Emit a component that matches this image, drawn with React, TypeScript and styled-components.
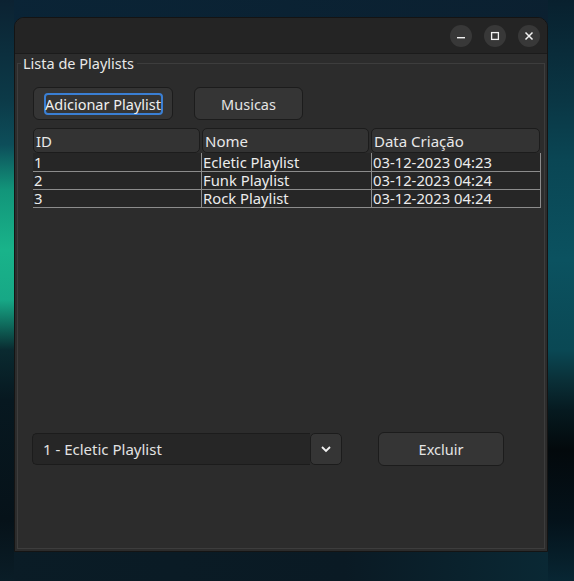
import React from "react";
import styled, { createGlobalStyle } from "styled-components";

const GlobalStyle = createGlobalStyle`
  html, body { margin: 0; padding: 0; }
  body {
    width: 574px; height: 581px; overflow: hidden;
    font-family: "Noto Sans", "Open Sans", sans-serif;
    -webkit-font-smoothing: antialiased;
  }
  * { box-sizing: border-box; }
`;

const Desktop = styled.div`
  width: 574px;
  height: 581px;
  padding: 17px 0 0 14px;
  background:
    linear-gradient(180deg, #0c2232 0px, #0c3a48 100px, #0d4e5a 145px, #12957a 190px, #19b38a 250px, #17a886 300px, #0f6a5c 325px, #0a2a30 350px, #071820 400px, #061219 520px, #0a1d27 581px) left top / 14px 581px no-repeat,
    linear-gradient(180deg, #08202e 0px, #0a3644 100px, #0a4654 160px, #0b5260 260px, #0a4854 350px, #0a3038 380px, #061a20 410px, #03090c 450px, #04121a 520px, #082633 581px) right top / 26px 581px no-repeat,
    linear-gradient(90deg, #0a1c26 0%, #0a1a24 60%, #0a2a36 100%) left bottom / 574px 30px no-repeat,
    linear-gradient(90deg, #0a2436 0%, #0b2030 100%);
`;

const Window = styled.div`
  width: 534px;
  height: 535px;
  display: flex;
  flex-direction: column;
  background: #2c2c2c;
  border: 1px solid #141414;
  border-radius: 10px 10px 0 0;
  overflow: hidden;
  color: #e8e8e8;
  font-size: 14.5px;
`;

const TitleBar = styled.div`
  height: 36px;
  flex: none;
  display: flex;
  align-items: center;
  justify-content: flex-end;
  gap: 12px;
  padding-right: 7px;
  background: #242424;
  border-bottom: 1px solid #1b1b1b;
`;

const TitleButton = styled.div`
  width: 22px;
  height: 22px;
  border-radius: 50%;
  background: #383838;
  display: flex;
  align-items: center;
  justify-content: center;
  color: #f2f2f2;
`;

const Body = styled.div`
  flex: 1;
  display: flex;
  padding: 0 2px 2px 2px;
`;

const Group = styled.fieldset`
  flex: 1;
  margin: 0;
  padding: 15px 2px 0 15px;
  border: 1px solid #3d3d3d;
  min-width: 0;
`;

const Legend = styled.legend`
  margin-left: -12px;
  padding: 0 3px 0 2px;
  line-height: 18px;
  font-size: 14.5px;
  color: #e8e8e8;
`;

const ButtonRow = styled.div`
  display: flex;
  gap: 21px;
`;

const Button = styled.button<{ $w: number; $h?: number }>`
  width: ${(p) => p.$w}px;
  height: ${(p) => p.$h ?? 33}px;
  background: #353535;
  border: 1px solid #1c1c1c;
  border-radius: 6px;
  color: #e4e4e4;
  font-family: inherit;
  font-size: 14.5px;
  padding: 0;
  display: flex;
  align-items: center;
  justify-content: center;
`;

const FocusRing = styled.span`
  border: 2px solid #3a7fd4;
  border-radius: 4px;
  height: 22px;
  width: 119px;
  display: flex;
  align-items: center;
  justify-content: center;
  color: #f0f0f0;
  white-space: nowrap;
`;

const Table = styled.div`
  margin-top: 8px;
  width: 508px;
`;

const HeaderRow = styled.div`
  display: grid;
  grid-template-columns: 167px 167px 169px;
  column-gap: 2px;
`;

const HeaderCell = styled.div`
  height: 25px;
  background: #333333;
  border: 1px solid #1c1c1c;
  border-radius: 5px;
  padding-left: 2px;
  display: flex;
  align-items: center;
  font-size: 15px;
  color: #e8e8e8;
`;

const DataRow = styled.div<{ $first?: boolean }>`
  display: grid;
  grid-template-columns: 168px 170px 170px;
  height: ${(p) => (p.$first ? 19 : 18)}px;
  background: #262626;
  border-bottom: 1px solid #8c8c8c;
`;

const DataCell = styled.div<{ $sep?: boolean }>`
  border-left: ${(p) => (p.$sep ? "1px solid #8c8c8c" : "none")};
  padding-left: 1px;
  display: flex;
  align-items: center;
  font-size: 14.8px;
  line-height: 17px;
  color: #ececec;
  white-space: nowrap;
  &:last-child { border-right: 1px solid #8c8c8c; }
`;

const BottomRow = styled.div`
  margin-top: 224px;
  margin-left: -1px;
  display: flex;
  align-items: center;
`;

const Combo = styled.div`
  display: flex;
  height: 32px;
`;

const ComboField = styled.div`
  width: 278px;
  background: #262626;
  border: 1px solid #1c1c1c;
  border-right: none;
  border-radius: 5px 0 0 5px;
  padding-left: 10px;
  display: flex;
  align-items: center;
  font-size: 15px;
  color: #e2e2e2;
`;

const ComboButton = styled.div`
  width: 32px;
  background: #353535;
  border: 1px solid #1c1c1c;
  border-radius: 5px;
  display: flex;
  align-items: center;
  justify-content: center;
  color: #f2f2f2;
`;

const DeleteWrap = styled.div`
  margin-left: 36px;
`;

const rows = [
  ["1", "Ecletic Playlist", "03-12-2023 04:23"],
  ["2", "Funk Playlist", "03-12-2023 04:24"],
  ["3", "Rock Playlist", "03-12-2023 04:24"],
];

export default function App() {
  return (
    <>
      <GlobalStyle />
      <Desktop>
        <Window>
          <TitleBar>
            <TitleButton>
              <svg width="10" height="10" viewBox="0 0 10 10">
                <rect x="1" y="6" width="8" height="1.4" fill="currentColor" />
              </svg>
            </TitleButton>
            <TitleButton>
              <svg width="10" height="10" viewBox="0 0 10 10">
                <rect x="1.6" y="1.6" width="6.8" height="6.8" fill="none" stroke="currentColor" strokeWidth="1.3" />
              </svg>
            </TitleButton>
            <TitleButton>
              <svg width="10" height="10" viewBox="0 0 10 10">
                <path d="M1.5 1.5 L8.5 8.5 M8.5 1.5 L1.5 8.5" stroke="currentColor" strokeWidth="1.5" />
              </svg>
            </TitleButton>
          </TitleBar>
          <Body>
            <Group>
              <Legend>Lista de Playlists</Legend>
              <ButtonRow>
                <Button $w={140}>
                  <FocusRing>Adicionar Playlist</FocusRing>
                </Button>
                <Button $w={109}>Musicas</Button>
              </ButtonRow>
              <Table>
                <HeaderRow>
                  <HeaderCell>ID</HeaderCell>
                  <HeaderCell>Nome</HeaderCell>
                  <HeaderCell>Data Criação</HeaderCell>
                </HeaderRow>
                {rows.map((r, i) => (
                  <DataRow key={r[0]} $first={i === 0}>
                    <DataCell>{r[0]}</DataCell>
                    <DataCell $sep>{r[1]}</DataCell>
                    <DataCell $sep>{r[2]}</DataCell>
                  </DataRow>
                ))}
              </Table>
              <BottomRow>
                <Combo>
                  <ComboField>1 - Ecletic Playlist</ComboField>
                  <ComboButton>
                    <svg width="12" height="8" viewBox="0 0 12 8">
                      <path d="M2 2 L6 6 L10 2" fill="none" stroke="currentColor" strokeWidth="1.8" />
                    </svg>
                  </ComboButton>
                </Combo>
                <DeleteWrap>
                  <Button $w={126} $h={34}>Excluir</Button>
                </DeleteWrap>
              </BottomRow>
            </Group>
          </Body>
        </Window>
      </Desktop>
    </>
  );
}
